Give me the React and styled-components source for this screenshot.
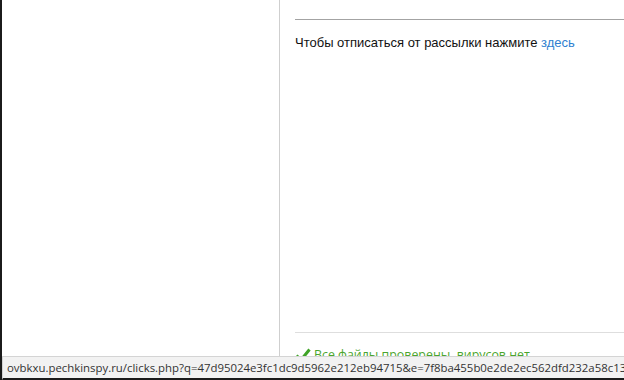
import React from "react";
import styled, { createGlobalStyle } from "styled-components";

const Global = createGlobalStyle`
  html, body {
    margin: 0;
    padding: 0;
    background: #fff;
    height: 100%;
    overflow: hidden;
  }
  #root {
    height: 100%;
  }
`;

const Frame = styled.div`
  display: flex;
  height: 380px;
  border-left: 2px solid #1b1b1b;
  box-sizing: border-box;
  position: relative;
`;

const Sidebar = styled.div`
  width: 277px;
  flex-shrink: 0;
  border-right: 1px solid #cfcfcf;
`;

const Main = styled.div`
  flex: 1;
  display: flex;
  flex-direction: column;
  padding: 19px 0 0 15px;
  min-width: 0;
`;

const Rule = styled.hr`
  margin: 0;
  border: 0;
  border-top: 1px solid ${(p) => p.$color};
`;

const Notice = styled.p`
  margin: 15px 0 0;
  font-family: "Liberation Sans", Arial, sans-serif;
  font-size: 13px;
  color: #111;
`;

const Link = styled.a`
  color: #2f7fd0;
  text-decoration: none;
`;

const Footer = styled.div`
  margin-top: auto;
  padding-bottom: 17px;
`;

const Checked = styled.div`
  display: flex;
  align-items: center;
  gap: 3px;
  margin-top: 13px;
  font-family: "Open Sans", "Noto Sans", sans-serif;
  font-size: 12.4px;
  color: #4aa52d;
`;

const StatusBar = styled.div`
  position: absolute;
  left: 0;
  right: 0;
  bottom: 0;
  height: 24px;
  box-sizing: border-box;
  background: #f2f2f2;
  border-top: 1px solid #d4d4d4;
  border-left: 1px solid #d4d4d4;
  border-bottom: 2px solid #1b1b1b;
  padding: 3px 0 0 4px;
  font-family: "Open Sans", "Noto Sans", sans-serif;
  font-size: 11.4px;
  color: #333;
  white-space: nowrap;
  overflow: hidden;
`;

const Check = () => (
  <svg width="16" height="14" viewBox="0 0 16 14">
    <path d="M1.5 7.5 L6 12 L14.5 1.5" fill="none" stroke="#3fa326" strokeWidth="3" />
  </svg>
);

export default function App() {
  return (
    <>
      <Global />
      <Frame>
        <Sidebar />
        <Main>
          <Rule $color="#a3a3a3" />
          <Notice>
            Чтобы отписаться от рассылки нажмите <Link href="#">здесь</Link>
          </Notice>
          <Footer>
            <Rule $color="#dedede" />
            <Checked>
              <Check />
              Все файлы проверены, вирусов нет
            </Checked>
          </Footer>
        </Main>
        <StatusBar>
          ovbkxu.pechkinspy.ru/clicks.php?q=47d95024e3fc1dc9d5962e212eb94715&amp;e=7f8ba455b0e2de2ec562dfd232a58c13
        </StatusBar>
      </Frame>
    </>
  );
}
